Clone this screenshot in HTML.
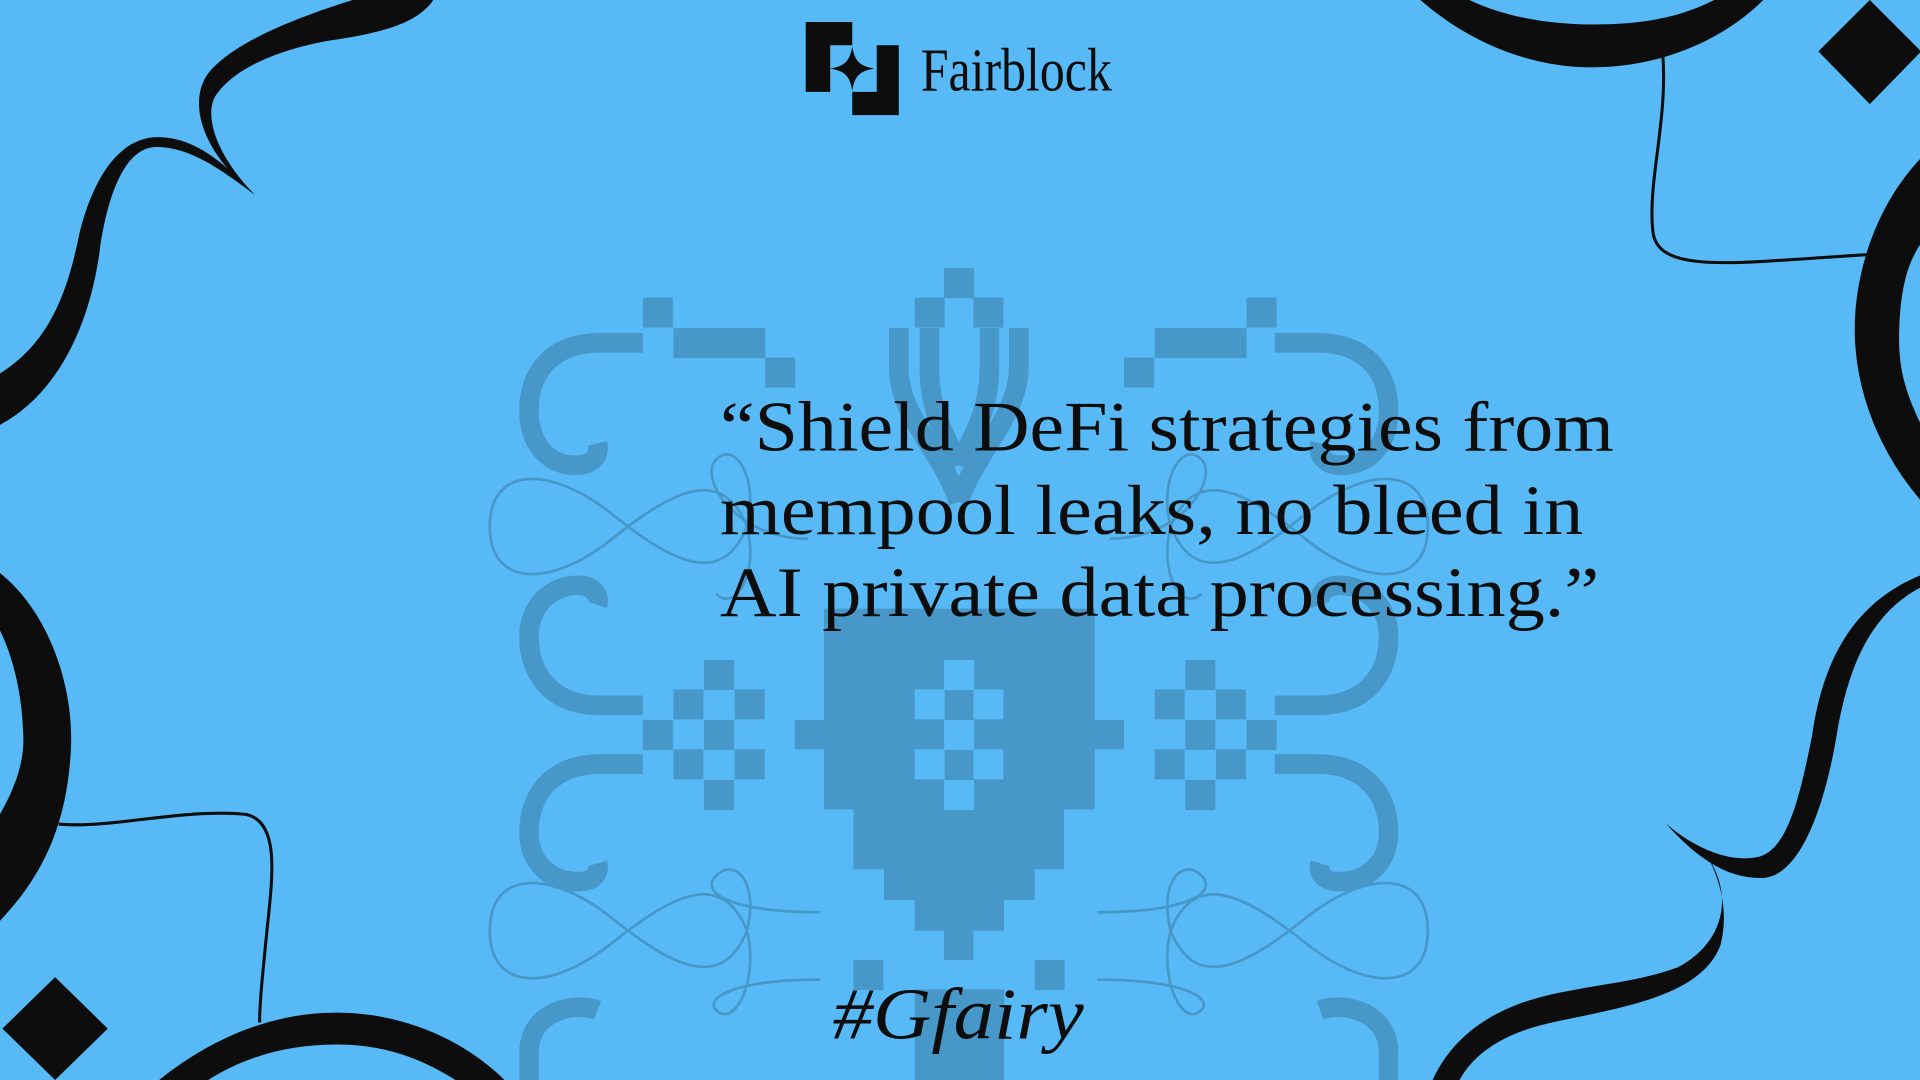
<!DOCTYPE html>
<html><head><meta charset="utf-8"><style>
html,body{margin:0;padding:0;background:#57baf6;overflow:hidden}
svg{display:block}
</style></head><body>
<svg width="1920" height="1080" viewBox="0 0 1568 882" preserveAspectRatio="none" xmlns="http://www.w3.org/2000/svg">
<rect width="1568" height="882" fill="#57baf6"/>
<!-- pattern -->
<g fill="#4797c9">
<rect x="771" y="219" width="24.5" height="24.5"/>
<rect x="747" y="243" width="24.5" height="24.5"/><rect x="795" y="243" width="24.5" height="24.5"/>
<!-- shield -->
<path d="M673,497 H894 V588 H918 V612 H894 V661 H869 V710 H845 V735 H820 V760 H795 V784 H771 V760 H747 V735 H722 V710 H697 V661 H673 V612 H649 V588 H673Z"/>
<!-- side top -->
<rect x="525" y="243" width="24.5" height="24.5"/><rect x="550" y="268" width="75" height="24.5"/><rect x="625" y="292" width="24.5" height="24.5"/>
<rect x="1018" y="243" width="24.5" height="24.5"/><rect x="943" y="268" width="75" height="24.5"/><rect x="918" y="292" width="24.5" height="24.5"/>
<!-- side diamonds -->
<rect x="575" y="539" width="24.5" height="24.5"/><rect x="550" y="563" width="24.5" height="24.5"/><rect x="600" y="563" width="24.5" height="24.5"/>
<rect x="525" y="588" width="24.5" height="24.5"/><rect x="575" y="588" width="24.5" height="24.5"/>
<rect x="550" y="612" width="24.5" height="24.5"/><rect x="600" y="612" width="24.5" height="24.5"/><rect x="575" y="637" width="24.5" height="24.5"/>
<rect x="968" y="539" width="24.5" height="24.5"/><rect x="943" y="563" width="24.5" height="24.5"/><rect x="993" y="563" width="24.5" height="24.5"/>
<rect x="1018" y="588" width="24.5" height="24.5"/><rect x="968" y="588" width="24.5" height="24.5"/>
<rect x="943" y="612" width="24.5" height="24.5"/><rect x="993" y="612" width="24.5" height="24.5"/><rect x="968" y="637" width="24.5" height="24.5"/>
<!-- bottom -->
<rect x="697" y="784" width="24.5" height="24.5"/><rect x="845" y="784" width="24.5" height="24.5"/>
<rect x="747" y="808" width="73" height="74"/>
</g>
<!-- shield inner light cells -->
<g fill="#57baf6">
<rect x="771" y="539" width="24.5" height="24.5"/><rect x="747" y="563" width="24.5" height="24.5"/><rect x="795" y="563" width="24.5" height="24.5"/>
<rect x="771" y="588" width="24.5" height="24.5"/><rect x="747" y="612" width="24.5" height="24.5"/><rect x="795" y="612" width="24.5" height="24.5"/>
<rect x="771" y="637" width="24.5" height="24.5"/>
</g>
<g fill="none" stroke="#4797c9" stroke-width="16">
<path d="M734,268 V300 C734,340 770,370 783,410 M832,268 V300 C832,340 796,370 783,410"/>
<path d="M759,268 V300 C759,340 775,360 783,380 M808,268 V300 C808,340 791,360 783,380"/>
<g id="lb">
<path d="M525,280 H490 C450,280 432,305 432,335 C432,365 450,380 470,380 C486,380 490,370 488,362"/>
<path d="M525,576 H490 C450,576 432,550 432,520 C432,495 450,478 472,478 C486,478 490,488 488,494"/>
<path d="M525,624 H490 C450,624 432,650 432,680 C432,705 450,720 472,720 C486,720 490,712 488,705"/>
<path d="M488,825 C470,818 432,825 432,860 V882"/>
</g>
<use href="#lb" transform="translate(1566,0) scale(-1,1)"/>
</g>
<g fill="none" stroke="#4797c9" stroke-width="2.2">
<g id="sw">
<path d="M400,430 C400,380 450,380 500,420 C550,460 590,480 610,430 C620,390 600,360 585,375 C570,390 600,440 660,440"/>
<path d="M400,430 C400,480 450,480 500,440 C550,400 590,380 610,430 C620,470 600,500 585,485"/>
<path d="M400,760 C400,710 450,710 500,750 C550,790 590,810 610,760 C620,720 600,700 585,715 C570,730 600,745 670,745"/>
<path d="M400,760 C400,810 450,810 500,770 C550,730 590,710 610,760 C620,800 600,840 585,825 C575,815 600,800 670,800"/>
</g>
<use href="#sw" transform="translate(1566,0) scale(-1,1)"/>
</g>
<!-- black corners -->
<g fill="#0d0d0d">
<path d="M288,0 C240,15 190,35 170,60 C155,80 160,120 208,159 C175,125 168,95 175,80 C190,55 230,40 270,33 C310,27 340,20 354,0Z"/>
<path d="M0,305 C40,280 55,240 65,190 C75,150 95,112 129,112 C160,112 185,135 208,159 C180,138 155,120 128,120 C105,120 90,150 82,200 C75,260 50,320 0,347Z"/>
<path d="M0,468 C40,500 60,560 58,610 C55,680 30,720 0,752 L0,665 C14,640 20,620 19,600 C18,565 10,535 0,515Z"/>
<polygon points="45,798 88,840 45,882 2,840"/>
<path d="M130,882 C180,842 230,827 275,827 C330,827 380,850 412,882 L372,882 C340,862 310,853 275,853 C235,853 200,863 170,882Z"/>
<path d="M1160,0 C1200,35 1250,55 1300,55 C1360,55 1410,30 1440,0 L1400,0 C1370,15 1340,20 1300,20 C1260,20 1225,12 1200,0Z"/>
<polygon points="1527,0 1569,42 1527,85 1485,42"/>
<path d="M1568,130 C1530,170 1512,230 1515,280 C1518,330 1540,375 1568,408 L1568,345 C1556,320 1550,300 1551,270 C1552,235 1558,215 1568,200Z"/>
<path d="M1568,480 C1530,500 1510,540 1500,600 C1490,660 1470,715 1440,717 C1410,718 1385,700 1360,672 C1380,690 1410,705 1435,700 C1460,695 1470,650 1480,600 C1490,530 1520,490 1568,470Z"/>
<path d="M1395,700 C1420,740 1400,775 1370,790 C1330,805 1280,805 1240,820 C1200,835 1180,860 1170,882 L1192,882 C1205,858 1232,842 1272,834 C1330,822 1390,812 1405,772 C1412,745 1405,720 1395,700Z"/>
</g>
<g fill="none" stroke="#0d0d0d" stroke-width="2.5">
<path d="M48,673 C90,677 150,660 200,665 C230,670 222,720 218,760 C214,800 212,820 212,835"/>
<path d="M1358,45 C1362,100 1345,150 1350,190 C1355,225 1420,214 1525,208"/>
</g>
<!-- logo -->
<g fill="#0d0d0d">
<path d="M658,18 H696 V37 H678 V75 H658Z"/>
<path d="M716,37 H734 V94 H696 V75 H716Z"/>
<path d="M696,38 C698,50 702,54 714,56 C702,58 698,62 696,74 C694,62 690,58 678,56 C690,54 694,50 696,38Z"/>
</g>
<text x="752" y="74" font-family="Liberation Serif, serif" font-size="50" textLength="156" lengthAdjust="spacingAndGlyphs" fill="#0d0d0d">Fairblock</text>
<g font-family="Liberation Serif, serif" font-size="58" fill="#0d0d0d">
<text x="588" y="368" textLength="730" lengthAdjust="spacingAndGlyphs">“Shield DeFi strategies from</text>
<text x="588" y="436" textLength="705" lengthAdjust="spacingAndGlyphs">mempool leaks, no bleed in</text>
<text x="588" y="503" textLength="718" lengthAdjust="spacingAndGlyphs">AI private data processing.”</text>
</g>
<text x="680" y="848" font-family="Liberation Serif, serif" font-style="italic" font-size="60" textLength="205" lengthAdjust="spacingAndGlyphs" fill="#0d0d0d">#Gfairy</text>
</svg>
</body></html>
